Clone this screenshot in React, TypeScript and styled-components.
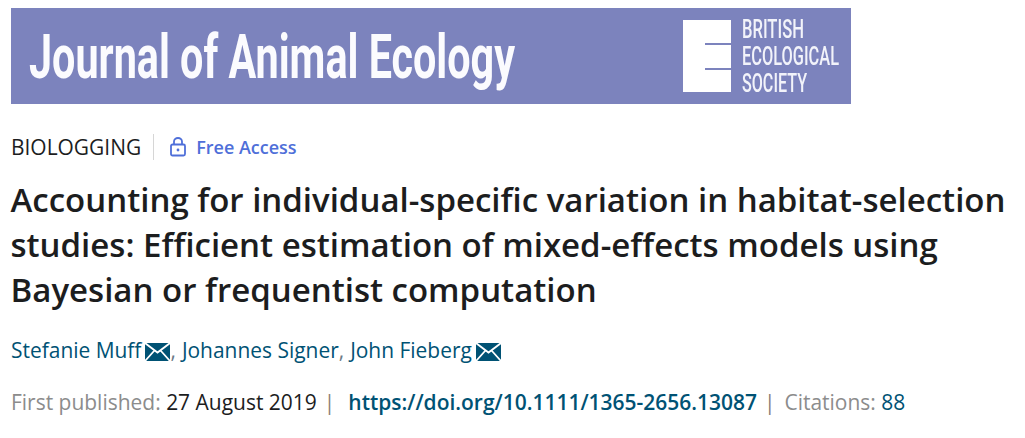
import React from "react";
import styled, { createGlobalStyle } from "styled-components";

const Global = createGlobalStyle`
  html, body { margin: 0; padding: 0; background: #fff; }
  body { font-family: "Open Sans", "Noto Sans", sans-serif; color: #1c1d1e; }
`;

const Page = styled.div`
  width: 1025px;
  height: 438px;
  padding: 8px 0 0 11px;
  box-sizing: border-box;
  overflow: hidden;
`;

const Banner = styled.svg`
  display: block;
  width: 840px;
  height: 96px;
`;

const MetaRow = styled.div`
  display: flex;
  align-items: center;
  height: 26px;
  margin-top: 30px;
`;

const Category = styled.span`
  font-size: 20.95px;
  line-height: 26px;
  color: #1c1d1e;
  padding-right: 12px;
  border-right: 1px solid #d6d6d6;
`;

const Access = styled.span`
  display: flex;
  align-items: center;
  gap: 10px;
  margin-left: 16px;
  font-size: 18px;
  font-weight: 600;
  color: #4f6fd9;
`;

const Title = styled.h1`
  margin: 18px 0 0 -0.5px;
  width: 1012px;
  font-size: 33px;
  line-height: 44.8px;
  font-weight: 600;
  color: #1c1d1e;
`;

const Authors = styled.div`
  display: flex;
  align-items: center;
  margin-top: 24px;
  height: 28px;
  font-size: 20.95px;
  color: #005274;
`;

const Comma = styled.span`
  color: #6b7a86;
  margin-right: 6px;
`;

const Mail = styled.svg`
  width: 25px;
  height: 18px;
  margin-left: 4px;
  margin-top: 4px;
`;

const Published = styled.div`
  display: flex;
  align-items: center;
  margin-top: 24px;
  height: 28px;
  font-size: 20.98px;
  white-space: pre;
`;

const Muted = styled.span`
  color: #8c8c8c;
`;

const DateText = styled.span`
  color: #1c1d1e;
`;

const Divider = styled.span<{ $before: number }>`
  color: #8a7f78;
  margin: 0 9px 0 ${(p) => p.$before}px;
`;

const Doi = styled.span`
  font-weight: 600;
  color: #005274;
  margin-left: 4px;
`;

const Count = styled.span`
  color: #005274;
`;

const MailIcon = () => (
  <Mail viewBox="0 0 25 18" aria-hidden="true">
    <rect width="25" height="18" fill="#005274" />
    <path d="M0 0l12.5 9.5L25 0M0 18l9-10M25 18l-9-10" fill="none" stroke="#fff" strokeWidth="1.8" />
  </Mail>
);

const societyLines = [
  { text: "BRITISH", y: 30, width: 62 },
  { text: "ECOLOGICAL", y: 57, width: 97 },
  { text: "SOCIETY", y: 84, width: 65 },
];

export default function App() {
  return (
    <Page>
      <Global />
      <Banner viewBox="0 0 840 96" role="img" aria-label="Journal of Animal Ecology, British Ecological Society">
        <defs>
          <filter id="soft" x="-2%" y="-2%" width="104%" height="104%">
            <feGaussianBlur stdDeviation="0.45" />
          </filter>
        </defs>
        <rect width="840" height="96" fill="#7c83bd" />
        <g filter="url(#soft)">
          <text transform="translate(18 70) scale(1 1.55)" fontFamily="Roboto, Liberation Sans, sans-serif" fontWeight="700" fontSize="40" fill="#fbfbfe" textLength="486" lengthAdjust="spacingAndGlyphs">
            Journal of Animal Ecology
          </text>
          <path d="M672 12h48v72h-48z" fill="#fff" />
          <path d="M694 35h26v2h-26zM694 60h26v2h-26z" fill="#7c83bd" />
          <g fontFamily="Roboto, Liberation Sans, sans-serif" fontWeight="500" fontSize="14" fill="#f2f3fa">
            {societyLines.map((line) => (
              <text key={line.text} transform={`translate(731 ${line.y}) scale(1 1.78)`} textLength={line.width} lengthAdjust="spacingAndGlyphs">
                {line.text}
              </text>
            ))}
          </g>
        </g>
      </Banner>
      <MetaRow>
        <Category>BIOLOGGING</Category>
        <Access>
          <svg width="16" height="20" viewBox="0 0 16 20" fill="none" stroke="#4f6fd9" strokeWidth="1.8" aria-hidden="true">
            <rect x="1" y="7.5" width="14" height="11" rx="1.5" />
            <path d="M4 7.5V4.5a4 3.5 0 0 1 8 0v3" />
            <circle cx="8" cy="13" r="1.4" fill="#4f6fd9" stroke="none" />
          </svg>
          Free Access
        </Access>
      </MetaRow>
      <Title>
        Accounting for individual-specific variation in habitat-selection
        <br />
        studies: Efficient estimation of mixed-effects models using
        <br />
        Bayesian or frequentist computation
      </Title>
      <Authors>
        Stefanie Muff
        <MailIcon />
        <Comma>,</Comma>
        Johannes Signer
        <Comma>,</Comma>
        John Fieberg
        <MailIcon />
      </Authors>
      <Published>
        <Muted>First published: </Muted>
        <DateText>27 August 2019</DateText>
        <Divider $before={7}>|</Divider>
        <Doi>https://doi.org/10.1111/1365-2656.13087</Doi>
        <Divider $before={7}>|</Divider>
        <Muted>Citations: </Muted>
        <Count>88</Count>
      </Published>
    </Page>
  );
}
